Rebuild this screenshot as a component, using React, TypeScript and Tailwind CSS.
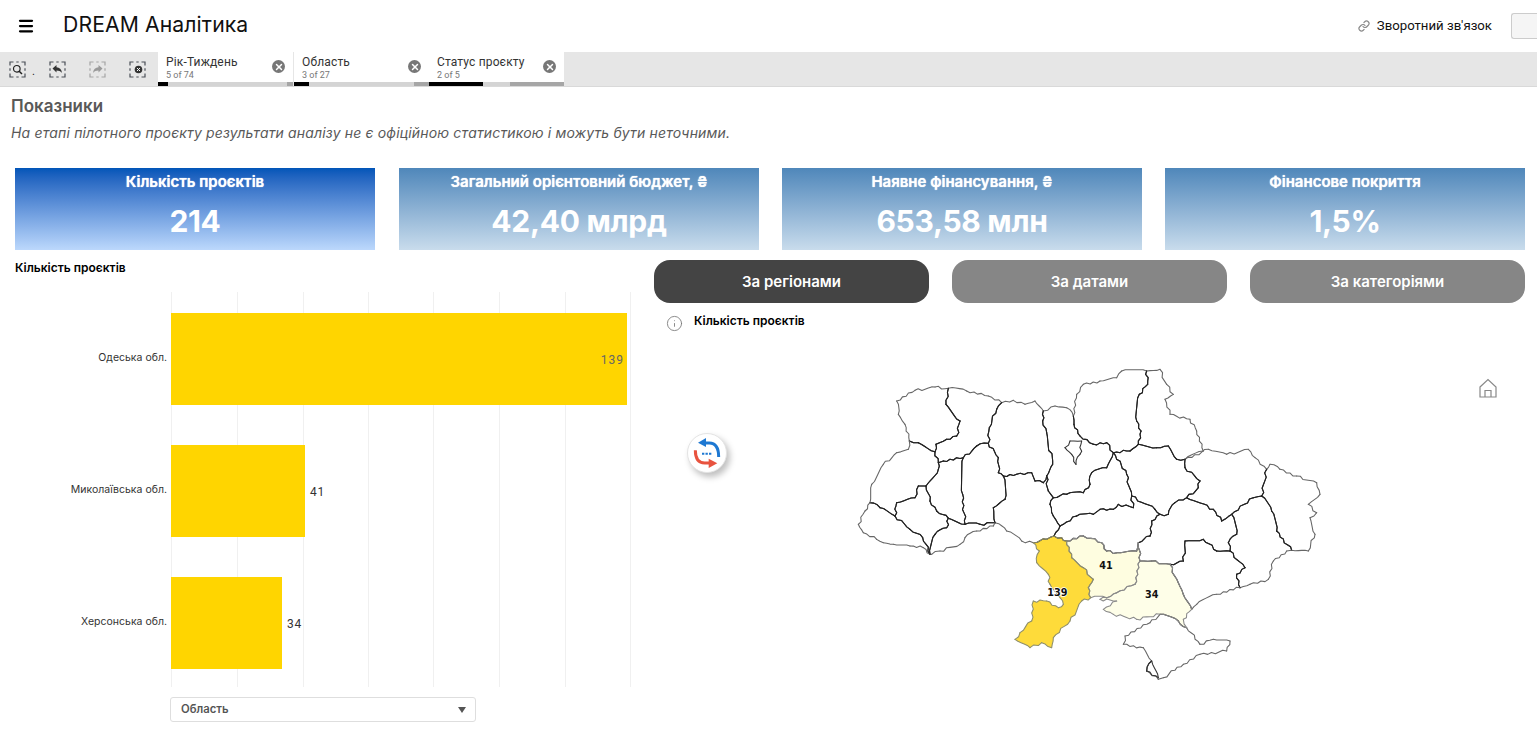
import { Link, Info, Menu, X } from "lucide-react";

type Pt = [number, number];

const regions: { pts: Pt[]; fill?: string; stroke?: string }[] = [
  { pts: [[140,120],[195,88],[255,78],[295,82],[288,130],[330,180],[320,225],[290,235],[258,250],[255,272],[205,245],[178,240],[165,190],[145,160]] },
  { pts: [[295,82],[350,90],[415,105],[455,125],[440,145],[418,200],[415,247],[380,255],[340,290],[280,300],[265,305],[255,272],[258,250],[290,235],[320,225],[330,180],[288,130]] },
  { pts: [[455,125],[490,118],[525,130],[555,120],[580,150],[578,180],[590,215],[608,310],[590,345],[580,365],[555,360],[545,335],[500,340],[460,345],[445,335],[445,290],[415,247],[418,200],[440,145]] },
  { pts: [[580,150],[615,135],[650,140],[670,165],[672,190],[690,225],[730,250],[770,245],[790,275],[770,320],[725,335],[720,370],[700,395],[650,400],[610,410],[595,390],[590,345],[608,310],[590,215],[578,180]] },
  { pts: [[660,240],[695,240],[690,280],[678,310],[665,280],[645,260]], stroke: "#333" },
  { pts: [[670,165],[680,100],[700,70],[750,60],[800,50],[815,30],[890,30],[893,70],[868,100],[860,180],[873,210],[865,250],[840,270],[790,275],[770,245],[730,250],[690,225],[672,190]] },
  { pts: [[890,30],[930,25],[950,70],[970,100],[945,115],[960,160],[1020,175],[1040,210],[1060,270],[1005,295],[980,295],[955,255],[920,260],[865,250],[873,210],[860,180],[868,100],[893,70]] },
  { pts: [[790,275],[840,270],[865,250],[920,260],[955,255],[980,295],[1005,295],[1005,320],[1050,360],[1045,380],[1010,410],[975,425],[955,460],[930,460],[915,445],[845,405],[830,340]] },
  { pts: [[1005,295],[1075,265],[1130,280],[1195,265],[1215,290],[1250,325],[1235,405],[1210,410],[1145,460],[1115,480],[1090,445],[1010,410],[1045,380],[1050,360],[1005,320]] },
  { pts: [[1250,325],[1260,310],[1290,325],[1340,345],[1400,365],[1410,400],[1375,430],[1400,455],[1380,470],[1395,520],[1375,570],[1325,568],[1280,510],[1265,450],[1235,405]] },
  { pts: [[1210,410],[1235,405],[1265,450],[1280,510],[1325,568],[1310,570],[1270,600],[1255,655],[1200,670],[1170,680],[1160,640],[1185,620],[1140,570],[1135,545],[1160,520],[1145,460]] },
  { pts: [[960,610],[1000,600],[1005,540],[1060,535],[1100,570],[1140,570],[1185,620],[1160,640],[1170,680],[1100,700],[1040,730],[1025,745],[1000,700],[985,665]] },
  { pts: [[865,545],[900,525],[905,480],[930,460],[955,460],[975,425],[1010,410],[1090,445],[1115,480],[1145,460],[1160,520],[1135,545],[1140,570],[1100,570],[1060,535],[1005,540],[1000,600],[960,610],[905,600],[870,600]] },
  { pts: [[610,410],[650,400],[700,395],[720,370],[725,335],[770,320],[790,275],[830,340],[845,405],[850,440],[805,430],[790,445],[750,445],[730,460],[680,465],[640,490],[630,495],[610,465],[600,430]] },
  { pts: [[612,525],[630,495],[640,490],[680,465],[730,460],[750,445],[790,445],[805,430],[850,440],[845,405],[915,445],[930,460],[905,480],[900,525],[865,545],[860,570],[800,575],[770,570],[755,545],[700,525],[650,540],[635,530]] },
  { pts: [[460,345],[500,340],[545,335],[555,360],[580,365],[590,345],[595,390],[610,410],[600,430],[610,465],[630,495],[612,525],[590,535],[550,545],[515,540],[470,510],[435,485],[430,440],[465,415]] },
  { pts: [[340,290],[380,255],[415,247],[445,290],[445,335],[460,345],[465,415],[430,440],[435,485],[390,490],[345,490],[338,400]] },
  { pts: [[228,375],[265,325],[265,305],[280,300],[340,290],[338,400],[345,490],[295,472],[260,450],[240,420]] },
  { pts: [[178,240],[205,245],[255,272],[265,305],[265,325],[228,375],[205,375],[195,410],[140,425],[135,465],[90,440],[60,425],[65,370],[100,310],[140,275],[175,265]] },
  { pts: [[140,425],[195,410],[205,375],[228,375],[240,420],[260,450],[295,472],[290,500],[255,520],[240,580],[218,530],[180,505],[135,465]] },
  { pts: [[60,425],[90,440],[135,465],[180,505],[218,530],[240,580],[220,560],[180,555],[130,550],[100,545],[80,535],[40,515],[25,490],[45,450]] },
  { pts: [[295,472],[345,490],[390,490],[435,485],[430,495],[380,510],[345,530],[330,550],[270,570],[245,580],[240,580],[255,520],[290,500]] },
  { pts: [[1010,800],[1050,850],[1090,835],[1140,840],[1130,870],[1050,880],[1000,910],[940,950],[925,955],[890,930],[905,900],[880,860],[820,850],[825,825],[900,785],[930,760],[985,780]] },
  { pts: [[905,900],[925,950],[890,930]], stroke: "#333" },
  { pts: [[870,600],[905,600],[960,610],[985,665],[1000,700],[1025,745],[1000,775],[1010,800],[985,780],[930,760],[860,775],[790,760],[760,745],[800,720],[750,715],[770,710],[800,695],[855,670]], fill: "#fefee8", stroke: "#8a8a8a" },
  { pts: [[650,540],[700,525],[755,545],[770,570],[800,575],[860,570],[865,545],[870,600],[855,670],[800,695],[770,710],[722,710],[715,680],[730,655],[700,620],[665,590]], fill: "#fefde0", stroke: "#8a8a8a" },
  { pts: [[550,545],[590,535],[612,525],[635,530],[650,540],[665,590],[700,620],[730,655],[715,680],[722,710],[695,720],[660,780],[610,830],[605,860],[575,845],[540,860],[495,835],[510,815],[545,780],[550,720],[590,720],[625,740],[640,730],[600,670],[595,640],[560,605],[568,570]], fill: "#fedb3a", stroke: "#8f8f6a" },
];

const edgeKey = (p: Pt, q: Pt) => {
  const a = `${p[0]},${p[1]}`;
  const b = `${q[0]},${q[1]}`;
  return a < b ? `${a}|${b}` : `${b}|${a}`;
};

// how many regions use each edge: 1 means it is on the country's outer border
const edgeUse = new Map<string, number>();
regions.forEach(({ pts }) =>
  pts.forEach((p, i) => {
    const k = edgeKey(p, pts[(i + 1) % pts.length]);
    edgeUse.set(k, (edgeUse.get(k) ?? 0) + 1);
  }),
);

// breaks an edge into small steps so borders look traced; both neighbours get the same steps
function jag(p: Pt, q: Pt): Pt[] {
  const flip = !edgeKey(p, q).startsWith(`${p[0]},${p[1]}|`);
  const [a, b] = flip ? [q, p] : [p, q];
  const dx = b[0] - a[0];
  const dy = b[1] - a[1];
  const len = Math.hypot(dx, dy) || 1;
  const steps = Math.max(1, Math.round(len / 11));
  const seed = a[0] * 7 + a[1] * 13 + b[0] * 17 + b[1] * 23;
  const out: Pt[] = [];
  for (let i = 1; i < steps; i++) {
    const off = ((seed * (i + 3)) % 9) - 4;
    const t = i / steps;
    out.push([a[0] + dx * t - (dy / len) * off, a[1] + dy * t + (dx / len) * off]);
  }
  return flip ? out.reverse() : out;
}

function outline(pts: Pt[]) {
  let d = "";
  pts.forEach((p, i) => {
    d += `${i === 0 ? "M" : "L"}${p[0]} ${p[1]} `;
    jag(p, pts[(i + 1) % pts.length]).forEach((m) => {
      d += `L${m[0].toFixed(1)} ${m[1].toFixed(1)} `;
    });
  });
  return d + "Z";
}

function edgeLine(p: Pt, q: Pt) {
  const mid = jag(p, q).map((m) => `L${m[0].toFixed(1)} ${m[1].toFixed(1)}`).join(" ");
  return `M${p[0]} ${p[1]} ${mid} L${q[0]} ${q[1]}`;
}

const tabs = [
  { title: "Рік-Тиждень", sub: "5 of 74", black: "w-[10px]", gray: "w-[6px]", space: "mr-px" },
  { title: "Область", sub: "3 of 27", black: "w-[15px]", gray: "w-[15px]", space: "" },
  { title: "Статус проєкту", sub: "2 of 5", black: "w-[54px]", gray: "w-[54px]", space: "" },
];

const cards = [
  { title: "Кількість проєктів", value: "214", bg: "bg-gradient-to-b from-[#0055b8] to-[#bcd8fc]" },
  { title: "Загальний орієнтовний бюджет, ₴", value: "42,40 млрд", bg: "bg-gradient-to-b from-[#4f87ba] to-[#c9dcec]" },
  { title: "Наявне фінансування, ₴", value: "653,58 млн", bg: "bg-gradient-to-b from-[#4f87ba] to-[#c9dcec]" },
  { title: "Фінансове покриття", value: "1,5%", bg: "bg-gradient-to-b from-[#4f87ba] to-[#c9dcec]" },
];

const bars = [
  { label: "Одеська обл.", value: 139, w: "w-[456px]", inside: true },
  { label: "Миколаївська обл.", value: 41, w: "w-[134px]", inside: false },
  { label: "Херсонська обл.", value: 34, w: "w-[111px]", inside: false },
];

const gridLines = [0, 66, 132, 197, 262, 328, 394, 459];

function ToolIcon({ kind }: { kind: "search" | "back" | "forward" | "clear" }) {
  const frame = kind === "forward" ? "#a5a5a5" : "#4a4f57";
  return (
    <svg width="17" height="17" viewBox="0 0 17 17" fill="none">
      <path d="M1 4.5V1H4.5M12.5 1H16V4.5M16 12.5V16H12.5M4.5 16H1V12.5" stroke={frame} strokeWidth="1.2" />
      <path d="M7.3 1H9.7M7.3 16H9.7M1 7.3V9.7M16 7.3V9.7" stroke={frame} strokeWidth="1.2" />
      {kind === "search" && (
        <>
          <circle cx="7.8" cy="7.8" r="3.3" stroke="#222" strokeWidth="1.2" />
          <path d="M10.2 10.2L13 13" stroke="#222" strokeWidth="1.5" />
        </>
      )}
      {kind === "back" && <path d="M3.5 7.5L7.5 4V6.3C10.5 6.5 12.6 8.5 13 12C11.5 10 9.8 9.4 7.5 9.4V11.5Z" fill="#333" />}
      {kind === "forward" && <path d="M13.5 7.5L9.5 4V6.3C6.5 6.5 4.4 8.5 4 12C5.5 10 7.2 9.4 9.5 9.4V11.5Z" fill="#999" />}
      {kind === "clear" && (
        <>
          <circle cx="9.5" cy="8.5" r="3.8" fill="#333" />
          <path d="M8 7L11 10M11 7L8 10" stroke="#fff" strokeWidth="1" />
        </>
      )}
    </svg>
  );
}

function SyncIcon() {
  return (
    <svg width="28" height="30" viewBox="0 0 82 90" fill="none">
      <path d="M36 15H48C66 15 76 28 76 57" stroke="#1e78d2" strokeWidth="9" />
      <path d="M38 0L14 14L38 27Z" fill="#1e78d2" />
      <path d="M6 37C6 62 16 75 34 75H50" stroke="#e8533f" strokeWidth="9" />
      <path d="M46 62L72 76L46 90Z" fill="#e8533f" />
      <path d="M26 47H56" stroke="#1e78d2" strokeWidth="6" strokeDasharray="7 3.5" />
    </svg>
  );
}

export default function App() {
  return (
    <div className="h-[730px] w-[1537px] overflow-hidden bg-white font-['Inter',sans-serif] text-black">
      <header className="flex h-[52px] items-center">
        <Menu className="ml-[17px] h-[18px] w-[18px]" strokeWidth={3} />
        <h1 className="ml-[28px] -mt-[2px] text-[21.2px] leading-none tracking-[0.1px] text-[#111]">DREAM Аналітика</h1>
        <div className="ml-auto flex items-center">
          <Link className="h-[12px] w-[12px] text-[#8a8a8a]" strokeWidth={2.4} />
          <span className="ml-[7px] font-['Roboto',sans-serif] text-[13.2px] text-[#111]">Зворотний зв'язок</span>
          <div className="ml-[19px] h-[26px] w-[26px] rounded-l-[3px] border border-r-0 border-[#ccc] bg-[#f5f5f5]" />
        </div>
      </header>

      <div className="flex h-[35px] border-b border-[#d9d9d9] bg-[#e6e6e6]">
        <div className="flex w-[158px] items-center pl-[9px]">
          <ToolIcon kind="search" />
          <span className="ml-[6px] mt-[4px] text-[10px] leading-none">.</span>
          <div className="ml-[14px]"><ToolIcon kind="back" /></div>
          <div className="ml-[23px]"><ToolIcon kind="forward" /></div>
          <div className="ml-[23px]"><ToolIcon kind="clear" /></div>
        </div>
        {tabs.map((t) => (
          <div key={t.title} className={`${t.space} flex h-[34px] w-[135px] flex-col bg-white`}>
            <div className="flex flex-1 items-center justify-between pl-[8px] pr-[8px]">
              <div className="mt-[1px] font-['Roboto',sans-serif] leading-none">
                <div className="text-[12px] tracking-[0.15px] text-[#333]">{t.title}</div>
                <div className="mt-[3px] text-[9px] text-[#777]">{t.sub}</div>
              </div>
              <span className="-mt-[1px] flex h-[13px] w-[13px] items-center justify-center rounded-full bg-[#777]">
                <X className="h-[10px] w-[10px] text-white" strokeWidth={3.5} />
              </span>
            </div>
            <div className="flex h-[4px] justify-between bg-[#d4d4d4]">
              <div className={`${t.black} bg-black`} />
              <div className={`${t.gray} bg-[#a6a6a6]`} />
            </div>
          </div>
        ))}
      </div>

      <section className="pl-[11px] pt-[8px]">
        <h2 className="text-[17px] font-semibold leading-[22px] text-[#595959]">Показники</h2>
        <p className="mt-[7px] text-[14px] italic leading-[18px] tracking-[0.16px] text-[#595959]">
          На етапі пілотного проєкту результати аналізу не є офіційною статистикою і можуть бути неточними.
        </p>
      </section>

      <div className="mt-[26px] flex gap-[23px] pl-[15px] pr-[12px]">
        {cards.map((c) => (
          <div key={c.title} className={`${c.bg} flex h-[82px] w-[360px] flex-col items-center text-white first:mr-px`}>
            <div className="mt-[4px] text-[15px] font-semibold leading-[20px] [text-shadow:0_0_1px_#fff]">{c.title}</div>
            <div className="mt-[9px] text-[30px] font-bold leading-[40px] tracking-[-0.3px]">{c.value}</div>
          </div>
        ))}
      </div>

      <div className="flex">
        <div className="w-[654px] shrink-0">
          <div className="ml-[15px] mt-[10px] text-[12px] font-semibold leading-[16px]">Кількість проєктів</div>
          <div className="relative mt-[16px] h-[395px]">
            {gridLines.map((x) => (
              <div key={x} className="absolute bottom-0 top-0 w-px bg-[#f0f0f0]" style={{ left: 171 + x }} />
            ))}
            <div className="relative flex flex-col gap-[40px] pt-[21px]">
              {bars.map((b) => (
                <div key={b.label} className="flex h-[92px] items-center">
                  <div className="w-[167px] shrink-0 pb-[3px] text-right text-[10.5px] text-[#333]">{b.label}</div>
                  <div className={`${b.w} ml-[4px] flex h-full items-center justify-end bg-[#ffd500] pr-[3px]`}>
                    {b.inside && <span className="mt-[2px] font-['Roboto',sans-serif] text-[12px] tracking-[1px] text-[#666]">{b.value}</span>}
                  </div>
                  {!b.inside && <span className="ml-[5px] mt-[2px] font-['Roboto',sans-serif] text-[12px] tracking-[0.8px] text-[#333]">{b.value}</span>}
                </div>
              ))}
            </div>
          </div>
          <div className="ml-[170px] mt-[10px] flex h-[25px] w-[306px] items-center justify-between rounded-[3px] border border-[#dedede] pl-[10px] pr-[9px]">
            <span className="text-[11.3px] font-semibold text-[#555]">Область</span>
            <span className="h-0 w-0 border-x-[4.5px] border-t-[6px] border-x-transparent border-t-[#555]" />
          </div>
        </div>

        <div className="relative flex-1">
          <div className="mt-[10px] flex gap-[23px]">
            <button className="h-[43px] w-[275px] rounded-[16px] bg-[#444] pt-[1px] text-[15px] font-semibold text-white">За регіонами</button>
            <button className="h-[43px] w-[275px] rounded-[16px] bg-[#868686] pt-[1px] text-[15px] font-semibold text-white">За датами</button>
            <button className="h-[43px] w-[275px] rounded-[16px] bg-[#868686] pt-[1px] text-[15px] font-semibold text-white">За категоріями</button>
          </div>
          <div className="mt-[12px] flex h-[16px] items-center pl-[12px]">
            <Info className="h-[17px] w-[17px] text-[#777]" strokeWidth={1.2} />
            <span className="ml-[11px] -mt-[4px] text-[12px] font-semibold">Кількість проєктів</span>
          </div>
          <svg width="480" height="330" viewBox="0 0 1440 990" className="ml-[196px] mt-[30px]" fill="none">
            {regions.map((r, i) => (
              <path key={i} d={outline(r.pts)} fill={r.fill ?? "#fff"} />
            ))}
            {regions.map((r, i) =>
              r.pts.map((p, j) => {
                const q = r.pts[(j + 1) % r.pts.length];
                const outer = edgeUse.get(edgeKey(p, q)) === 1;
                return (
                  <path
                    key={`${i}-${j}`}
                    d={edgeLine(p, q)}
                    stroke={r.stroke ?? (outer ? "#666" : "#222")}
                    strokeWidth="3.2"
                    strokeLinejoin="round"
                    strokeLinecap="round"
                  />
                );
              }),
            )}
            <g fontFamily="'DejaVu Sans', sans-serif" fontSize="29" fontWeight="700" fill="#111" textAnchor="middle">
              <text x="622" y="704" stroke="#fff" strokeWidth="5" paintOrder="stroke">139</text>
              <text x="768" y="624">41</text>
              <text x="905" y="712">34</text>
            </g>
          </svg>
          <div className="absolute left-[33px] top-[183px] flex h-[40px] w-[40px] items-center justify-center rounded-full border border-[#e4e4e4] bg-white shadow-[3px_4px_6px_rgba(0,0,0,0.25)]">
            <SyncIcon />
          </div>
          <svg width="18" height="20" viewBox="0 0 18 20" fill="none" className="absolute left-[825px] top-[128px]" stroke="#888" strokeWidth="1.2">
            <path d="M1 9L9 1.5L17 9V19H1Z" />
            <path d="M6 19V12.5H12V19" />
          </svg>
        </div>
      </div>
    </div>
  );
}
